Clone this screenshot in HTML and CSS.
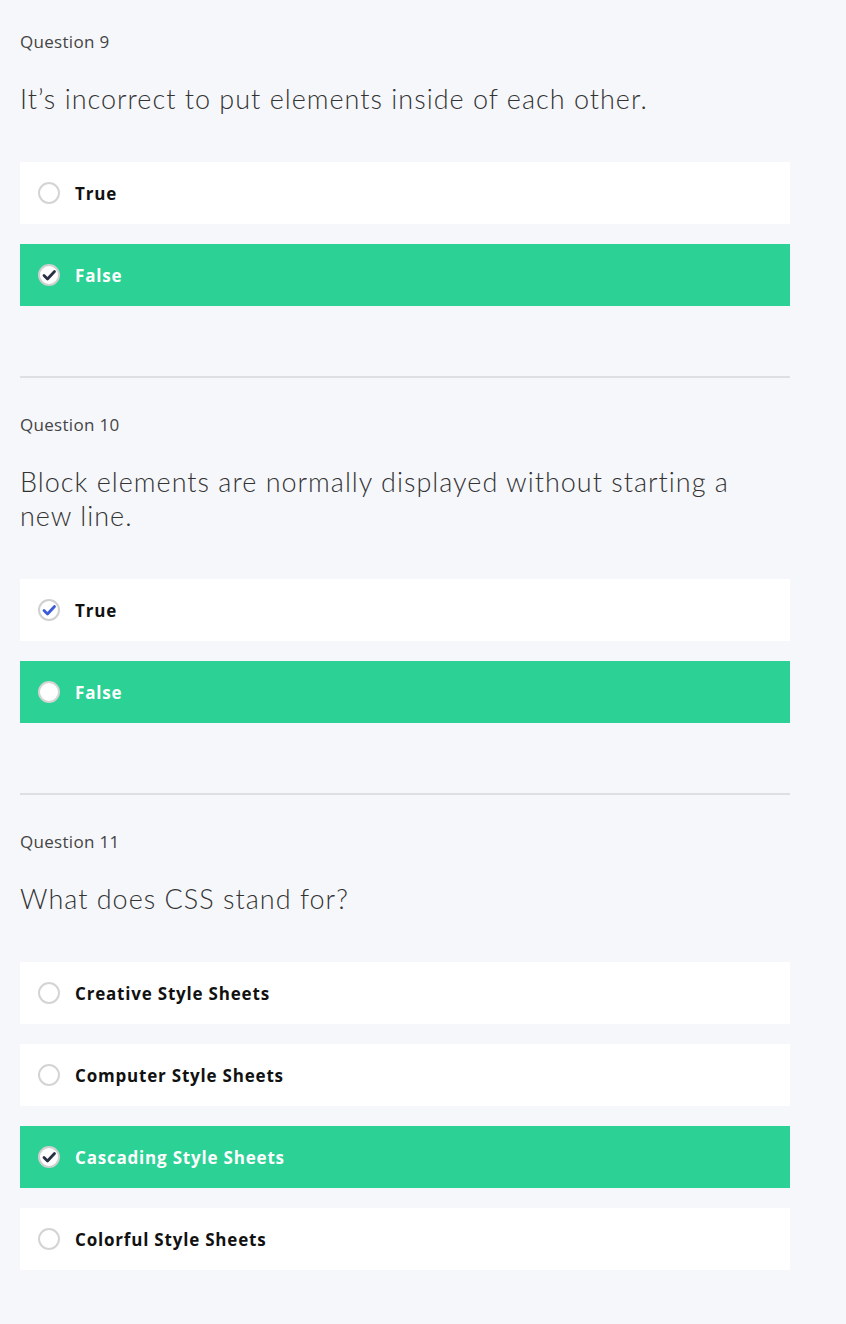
FILE: index.html
```html
<!DOCTYPE html>
<html lang="en">
<head>
<meta charset="utf-8">
<title>Quiz</title>
<link rel="stylesheet" href="styles.css">
</head>
<body>
<main class="quiz">
  <section class="question">
    <div class="q-label">Question 9</div>
    <h2 class="q-text">It’s incorrect to put elements inside of each other.</h2>
    <ul class="options">
      <li class="option"><span class="radio"></span><span class="opt-label">True</span></li>
      <li class="option option-correct"><span class="radio radio-checked"><svg viewBox="0 0 22 22"><path d="M6 11.5 L9.5 15 L16.5 7.5" fill="none" stroke="#2a2f45" stroke-width="2.8" stroke-linecap="round" stroke-linejoin="round"/></svg></span><span class="opt-label">False</span></li>
    </ul>
  </section>
  <hr class="divider">
  <section class="question">
    <div class="q-label">Question 10</div>
    <h2 class="q-text">Block elements are normally displayed without starting a new line.</h2>
    <ul class="options">
      <li class="option"><span class="radio radio-checked"><svg viewBox="0 0 22 22"><path d="M6 11.5 L9.5 15 L16.5 7.5" fill="none" stroke="#3b5bd9" stroke-width="2.8" stroke-linecap="round" stroke-linejoin="round"/></svg></span><span class="opt-label">True</span></li>
      <li class="option option-correct"><span class="radio radio-white"></span><span class="opt-label">False</span></li>
    </ul>
  </section>
  <hr class="divider">
  <section class="question">
    <div class="q-label">Question 11</div>
    <h2 class="q-text">What does CSS stand for?</h2>
    <ul class="options">
      <li class="option"><span class="radio"></span><span class="opt-label">Creative Style Sheets</span></li>
      <li class="option"><span class="radio"></span><span class="opt-label">Computer Style Sheets</span></li>
      <li class="option option-correct"><span class="radio radio-checked"><svg viewBox="0 0 22 22"><path d="M6 11.5 L9.5 15 L16.5 7.5" fill="none" stroke="#2a2f45" stroke-width="2.8" stroke-linecap="round" stroke-linejoin="round"/></svg></span><span class="opt-label">Cascading Style Sheets</span></li>
      <li class="option"><span class="radio"></span><span class="opt-label">Colorful Style Sheets</span></li>
    </ul>
  </section>
</main>
</body>
</html>
```

FILE: styles.css
```css
html, body {
  margin: 0;
  padding: 0;
  background: #f6f7fb;
}
.quiz {
  width: 770px;
  padding: 30px 20px 54px;
}
.question {
  display: flex;
  flex-direction: column;
}
.q-label {
  font-family: "Open Sans", sans-serif;
  font-size: 17px;
  line-height: 24px;
  letter-spacing: 0.3px;
  color: #444;
}
.q-text {
  margin: 28px 30px 46px 0;
  font-family: "Lato", sans-serif;
  font-weight: 300;
  font-size: 27px;
  line-height: 34px;
  letter-spacing: 1px;
  color: #333;
}
.options {
  list-style: none;
  margin: 0;
  padding: 0;
  display: flex;
  flex-direction: column;
  gap: 20px;
}
.option {
  height: 62px;
  background: #fff;
  display: flex;
  align-items: center;
  padding-left: 18px;
  gap: 15px;
}
.option-correct {
  background: #2bd195;
}
.option-correct .opt-label {
  color: #fff;
}
.opt-label {
  font-family: "Open Sans", sans-serif;
  font-weight: 700;
  font-size: 17px;
  letter-spacing: 0.8px;
  color: #111;
}
.radio {
  width: 22px;
  height: 22px;
  box-sizing: border-box;
  border: 2px solid #d4d4d4;
  border-radius: 50%;
  background: #fff;
  display: flex;
  align-items: center;
  justify-content: center;
}
.radio svg {
  width: 22px;
  height: 22px;
  flex: none;
}
.radio-checked {
  border-color: #d0d0d0;
}
.divider {
  border: none;
  height: 2px;
  background: #dedfe2;
  margin: 70px 0 35px;
}
```
